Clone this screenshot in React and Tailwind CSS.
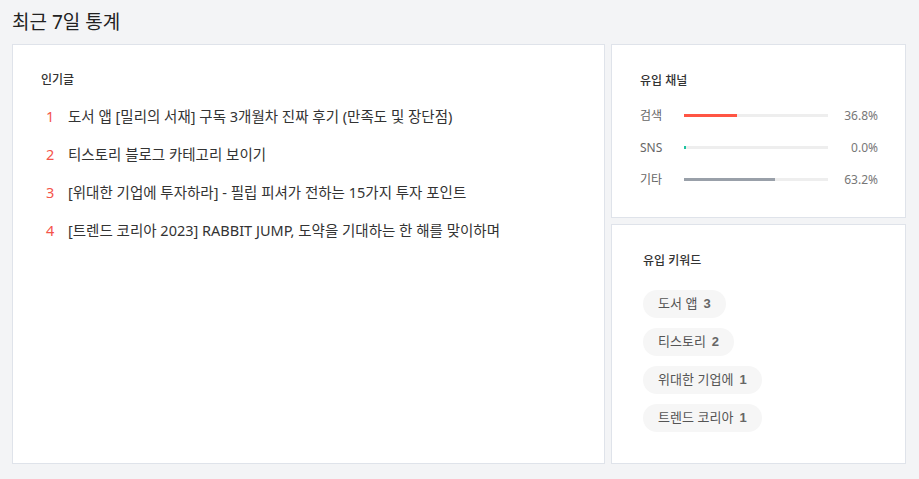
const POSTS = [
  "도서 앱 [밀리의 서재] 구독 3개월차 진짜 후기 (만족도 및 장단점)",
  "티스토리 블로그 카테고리 보이기",
  "[위대한 기업에 투자하라] - 필립 피셔가 전하는 15가지 투자 포인트",
  "[트렌드 코리아 2023] RABBIT JUMP, 도약을 기대하는 한 해를 맞이하며",
];

const CHANNELS = [
  { label: "검색", pct: 36.8, color: "bg-[#ff5544]" },
  { label: "SNS", pct: 0.0, color: "bg-[#1cc3a0]" },
  { label: "기타", pct: 63.2, color: "bg-[#99a0a9]" },
];

const KEYWORDS = [
  { word: "도서 앱", count: 3 },
  { word: "티스토리", count: 2 },
  { word: "위대한 기업에", count: 1 },
  { word: "트렌드 코리아", count: 1 },
];

export default function App() {
  return (
    <div className="min-h-[479px] bg-[#f3f4f6] pl-3 pr-[13px] pb-[15px] font-['Noto_Sans','Noto_Sans_CJK_KR',sans-serif] text-[#333]">
      <h1 className="pt-[7px] pb-[7px] text-[19px] leading-[30px] text-[#222]">최근 7일 통계</h1>
      <div className="flex gap-[6px]">
        <section className="flex-1 h-[420px] border border-[#dfe3ea] bg-white pl-[28px] pt-[26px]">
          <h2 className="text-[12px] leading-[18px] font-medium text-[#333]">인기글</h2>
          <ol className="mt-[17px] flex flex-col gap-[17px]">
            {POSTS.map((p, i) => (
              <li key={i} className="flex items-center text-[14.5px] leading-[21px] text-[#333]">
                <span className="w-[27px] pl-[5px] text-[#f4544a]">{i + 1}</span>
                <span>{p}</span>
              </li>
            ))}
          </ol>
        </section>
        <div className="w-[295px] flex flex-col gap-[6px]">
          <section className="h-[174px] border border-[#dfe3ea] bg-white pl-[28px] pr-[27px] pt-[27px]">
            <h2 className="text-[12px] leading-[18px] font-medium text-[#333]">유입 채널</h2>
            <div className="mt-[16px] flex flex-col gap-[13px]">
              {CHANNELS.map((c) => (
                <div key={c.label} className="flex items-center h-[19px] text-[12px] text-[#666]">
                  <span className="w-[43px]">{c.label}</span>
                  <div className="ml-px w-[144px] h-[3px] bg-[#eeeeee]">
                    <div className={`h-full ${c.color}`} style={{ width: `${Math.max(c.pct, 1.2)}%` }} />
                  </div>
                  <span className="flex-1 text-right text-[#777]">{c.pct.toFixed(1)}%</span>
                </div>
              ))}
            </div>
          </section>
          <section className="flex-1 border border-[#dfe3ea] bg-white pl-[31px] pt-[27px]">
            <h2 className="text-[12px] leading-[18px] font-medium text-[#333]">유입 키워드</h2>
            <div className="mt-[20px] flex flex-col items-start gap-[10px]">
              {KEYWORDS.map((k) => (
                <span
                  key={k.word}
                  className="inline-flex items-center h-[28px] rounded-full bg-[#f6f6f6] px-[15px] text-[13px] text-[#555] font-['Liberation_Sans','Noto_Sans_CJK_KR',sans-serif]"
                >
                  {k.word}
                  <span className="ml-[6px] font-bold text-[#666]">{k.count}</span>
                </span>
              ))}
            </div>
          </section>
        </div>
      </div>
    </div>
  );
}
